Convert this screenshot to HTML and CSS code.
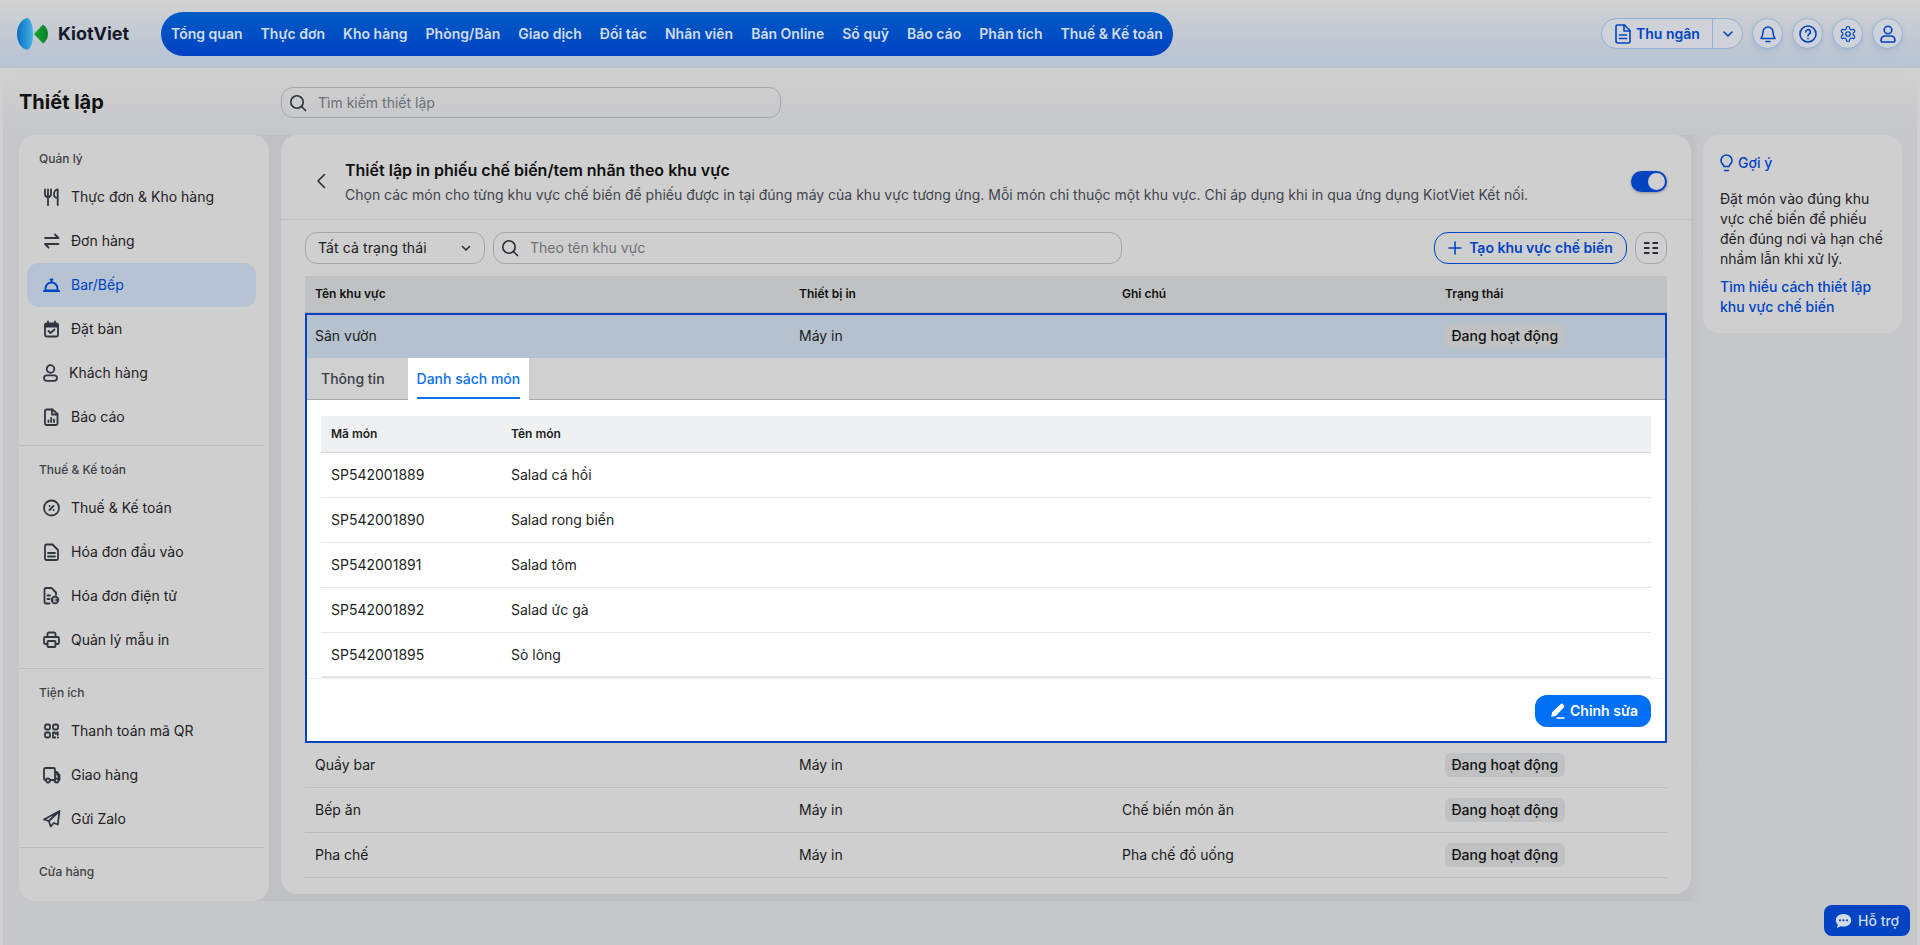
FILE: index.html
```html
<!DOCTYPE html>
<html lang="vi">
<head>
<meta charset="utf-8">
<title>Thiết lập</title>
<link rel="stylesheet" href="styles.css">
</head>
<body>
<header class="topbar">
  <div class="logo">
    <svg class="logo-mark" width="32" height="32" viewBox="0 0 32 32"><defs><linearGradient id="lg" x1="0" x2="1"><stop offset="0" stop-color="#0a6cc6"/><stop offset="1" stop-color="#43b4e2"/></linearGradient><linearGradient id="lg2" x1="0" x2="1"><stop offset="0" stop-color="#14a52a"/><stop offset="1" stop-color="#0b7f2e"/></linearGradient></defs><path d="M11.500 0C5 1 1 8 1 16s4 15 10.500 16C15 31 17 23 17 16S15 1 11.500 0Z" fill="url(#lg)"/><path d="M18 16 27 6.500C30 8.500 32 12 32 16s-2 7.500-5 9.500Z" fill="url(#lg2)"/></svg>
    <span class="logo-text">KiotViet</span>
  </div>
  <nav class="mainnav">
    <a>Tổng quan</a><a>Thực đơn</a><a>Kho hàng</a><a>Phòng/Bàn</a><a>Giao dịch</a><a>Đối tác</a><a>Nhân viên</a><a>Bán Online</a><a>Sổ quỹ</a><a>Báo cáo</a><a>Phân tích</a><a>Thuế &amp; Kế toán</a>
  </nav>
  <div class="top-actions">
    <div class="cashier">
      <span class="cashier-main">
        <svg class="ic-blue" width="16" height="20" viewBox="0 0 16 20"><path d="M2.500 1h7L15 6.500V17a2 2 0 0 1-2 2H3a2 2 0 0 1-2-2V2.500A1.500 1.500 0 0 1 2.500 1Z"/><path d="M9 1v6h6M4.500 11h7M4.500 14.500h7"/></svg>
        Thu ngân
      </span>
      <span class="cashier-caret"><svg class="ic-blue" width="12" height="12" viewBox="0 0 12 12"><path d="m2 4 4 4 4-4"/></svg></span>
    </div>
    <button class="circle"><svg class="ic-blue" width="16" height="18" viewBox="0 0 16 18"><path d="M3 7a5 5 0 0 1 10 0c0 4 1.500 5.500 2 6.500H1C1.500 12.500 3 11 3 7ZM6 16.500h4"/></svg></button>
    <button class="circle"><svg class="ic-blue" width="18" height="18" viewBox="0 0 18 18"><circle cx="9" cy="9" r="8"/><path d="M6.800 7a2.300 2.300 0 1 1 3.400 2c-.8.500-1.200 1-1.200 2M9 13.500v.2"/></svg></button>
    <button class="circle"><svg class="ic-blue" width="18" height="18" viewBox="0 0 24 24"><path d="M12.200 2h-.4a2 2 0 0 0-2 2v.2a2 2 0 0 1-1 1.700l-.4.300a2 2 0 0 1-2 0l-.2-.1a2 2 0 0 0-2.700.7l-.2.400a2 2 0 0 0 .7 2.700l.2.100a2 2 0 0 1 1 1.700v.5a2 2 0 0 1-1 1.700l-.2.100a2 2 0 0 0-.7 2.700l.2.400a2 2 0 0 0 2.700.7l.2-.1a2 2 0 0 1 2 0l.4.300a2 2 0 0 1 1 1.700v.2a2 2 0 0 0 2 2h.4a2 2 0 0 0 2-2v-.2a2 2 0 0 1 1-1.700l.4-.3a2 2 0 0 1 2 0l.2.100a2 2 0 0 0 2.700-.7l.2-.4a2 2 0 0 0-.7-2.700l-.2-.1a2 2 0 0 1-1-1.700v-.5a2 2 0 0 1 1-1.700l.2-.1a2 2 0 0 0 .7-2.700l-.2-.4a2 2 0 0 0-2.700-.7l-.2.100a2 2 0 0 1-2 0l-.4-.3a2 2 0 0 1-1-1.700V4a2 2 0 0 0-2-2Z"/><circle cx="12" cy="12" r="3"/></svg></button>
    <button class="circle"><svg class="ic-blue" width="16" height="18" viewBox="0 0 16 18"><circle cx="8" cy="5" r="3.800"/><path d="M1 15.500c0-3 2-4.500 4.500-4.500h5c2.500 0 4.500 1.500 4.500 4.500 0 1-.6 1.500-1.500 1.500h-11C1.600 17 1 16.500 1 15.500Z"/></svg></button>
  </div>
</header>

<main class="panel">
  <div class="panel-head">
    <h1 class="page-title">Thiết lập</h1>
    <div class="search search-top">
      <svg class="ic-dark" width="18" height="18" viewBox="0 0 18 18"><circle cx="8" cy="8" r="6.200"/><path d="m12.500 12.500 4 4"/></svg>
      <span>Tìm kiếm thiết lập</span>
    </div>
  </div>

  <div class="workspace">
    <div class="work-main">
    <aside class="sidebar">
      <section class="side-section">
        <h2>Quản lý</h2>
        <a class="side-item"><svg class="ic-side" width="20" height="20" viewBox="0 0 20 20"><path d="M2 2.500V7a3 3 0 0 0 6 0V2.500M5 2.500V18M14.700 18V2.500C12.500 2.500 11 5 11 7.500s1.500 3.500 3.700 3.500"/></svg>Thực đơn &amp; Kho hàng</a>
        <a class="side-item"><svg class="ic-side" width="20" height="20" viewBox="0 0 20 20"><path d="M2 7h13.500l-3.500-3.500M15.500 13H2l3.500 3.500"/></svg>Đơn hàng</a>
        <a class="side-item active"><svg class="ic-active" width="20" height="20" viewBox="0 0 20 20"><path d="M2.500 13.500a6 6 0 0 1 12 0v2h-12ZM.8 16h15.400M8.500 7.500V5M7.500 4.500h2"/></svg>Bar/Bếp</a>
        <a class="side-item"><svg class="ic-side" width="20" height="20" viewBox="0 0 20 20"><rect x="2" y="4.500" width="13" height="13" rx="1.500"/><path d="M2 7.500h13M2 5.800h13M5 2.500v2M12 2.500v2M5.500 12l2 2 4-3.500"/></svg>Đặt bàn</a>
        <a class="side-item narrow"><svg class="ic-side" width="18" height="20" viewBox="0 0 18 20"><circle cx="7.500" cy="6" r="3.800"/><rect x="1" y="12.300" width="13" height="5.500" rx="2.700"/></svg>Khách hàng</a>
        <a class="side-item"><svg class="ic-side" width="20" height="20" viewBox="0 0 20 20"><path d="M3.500 2.500h6L14.500 7v9.500a1.500 1.500 0 0 1-1.500 1.500H3.500A1.500 1.500 0 0 1 2 16.500V4a1.500 1.500 0 0 1 1.500-1.500Z"/><path d="M9 2.500V7.500h5.500M5.500 15v-1.500M8.200 15v-4M11 15v-2.500"/></svg>Báo cáo</a>
      </section>
      <section class="side-section">
        <h2>Thuế &amp; Kế toán</h2>
        <a class="side-item"><svg class="ic-side" width="20" height="20" viewBox="0 0 20 20"><circle cx="8.500" cy="10" r="7.500"/><path d="m6.500 12 4-4M6.500 8h.1M10.500 12h.1"/></svg>Thuế &amp; Kế toán</a>
        <a class="side-item"><svg class="ic-side" width="20" height="20" viewBox="0 0 20 20"><path d="M3.500 2.500h6L15 8v8.500a1.500 1.500 0 0 1-1.500 1.500h-10A1.500 1.500 0 0 1 2 16.500V4a1.500 1.500 0 0 1 1.500-1.500Z"/><path d="M5 11h7M5 14.500h7"/></svg>Hóa đơn đầu vào</a>
        <a class="side-item"><svg class="ic-side" width="20" height="20" viewBox="0 0 20 20"><path d="M6.500 17.500H3A1.500 1.500 0 0 1 1.500 16V3.500A1.500 1.500 0 0 1 3 2h5.500l4.500 4.500V9"/><path d="M4.500 9.500h2.500M4.500 13h2"/><circle cx="12" cy="14" r="4.200" fill="#2f3640" stroke="none"/><path class="ic-e" d="M13.200 12.200h-2.300v3.600h2.300M10.900 14h2"/></svg>Hóa đơn điện tử</a>
        <a class="side-item"><svg class="ic-side" width="20" height="20" viewBox="0 0 20 20"><path d="M4.500 7V4a1.500 1.500 0 0 1 1.500-1.500h5A1.500 1.500 0 0 1 12.500 4v3M4.500 14H2.500A1.500 1.500 0 0 1 1 12.500v-4A1.500 1.500 0 0 1 2.500 7h12A1.500 1.500 0 0 1 16 8.500v4a1.500 1.500 0 0 1-1.500 1.500h-2"/><rect x="4.500" y="11" width="8" height="6" rx="1"/></svg>Quản lý mẫu in</a>
      </section>
      <section class="side-section">
        <h2>Tiện ích</h2>
        <a class="side-item"><svg class="ic-side" width="20" height="20" viewBox="0 0 20 20"><rect x="2" y="3.500" width="5" height="5" rx="1.500"/><rect x="10" y="3.500" width="5" height="5" rx="1.500"/><rect x="2" y="11.500" width="5" height="5" rx="1.500"/><path d="M10 16.500v-5h1.800l1 1.500 1.200-1.500h.8v2.500M14.800 16.500h.2M10.800 16.500h1.500"/></svg>Thanh toán mã QR</a>
        <a class="side-item"><svg class="ic-side" width="20" height="20" viewBox="0 0 20 20"><path d="M2.800 15H2.500A1.500 1.500 0 0 1 1 13.500v-9A1.500 1.500 0 0 1 2.500 3h8A1.500 1.500 0 0 1 12 4.500V15H7.200"/><path d="M12 7h2l2.500 3v5h-.5" fill="#2f3640"/><circle cx="5" cy="15.500" r="2"/><circle cx="13.500" cy="15.500" r="2"/></svg>Giao hàng</a>
        <a class="side-item"><svg class="ic-side" width="20" height="20" viewBox="0 0 20 20"><path d="M16.500 2 1 10.500l4.800 1.500 2 5.500 3-3.500 4 1.500ZM16.500 2 5.800 12"/></svg>Gửi Zalo</a>
      </section>
      <section class="side-section last">
        <h2>Cửa hàng</h2>
      </section>
    </aside>

    <section class="content">
      <div class="content-head">
        <svg class="ic-dark back" width="10" height="16" viewBox="0 0 10 16"><path d="M8.500 1.500 2 8l6.500 6.500"/></svg>
        <div class="head-text">
          <h2>Thiết lập in phiếu chế biến/tem nhãn theo khu vực</h2>
          <p>Chọn các món cho từng khu vực chế biến để phiếu được in tại đúng máy của khu vực tương ứng. Mỗi món chỉ thuộc một khu vực. Chỉ áp dụng khi in qua ứng dụng KiotViet Kết nối.</p>
        </div>
        <span class="toggle"><span class="knob"></span></span>
      </div>

      <div class="toolbar">
        <div class="select">
          <span>Tất cả trạng thái</span>
          <svg class="ic-dark" width="10" height="10" viewBox="0 0 10 10"><path d="m1.500 3.500 3.500 3.500 3.500-3.500"/></svg>
        </div>
        <div class="search search-area">
          <svg class="ic-dark" width="18" height="18" viewBox="0 0 18 18"><circle cx="8" cy="8" r="6.200"/><path d="m12.500 12.500 4 4"/></svg>
          <span>Theo tên khu vực</span>
        </div>
        <button class="btn-add"><svg class="ic-blue" width="14" height="14" viewBox="0 0 14 14"><path d="M7 1v12M1 7h12"/></svg>Tạo khu vực chế biến</button>
        <button class="btn-grid"><svg class="ic-grid" width="16" height="14" viewBox="0 0 16 14"><path d="M1 2h5.500M9.500 2H15M1 7h5.500M9.500 7H15M1 12h5.500M9.500 12H15"/></svg></button>
      </div>

      <div class="table">
        <div class="row row-head"><span>Tên khu vực</span><span>Thiết bị in</span><span>Ghi chú</span><span>Trạng thái</span></div>
        <div class="open">
          <div class="row row-selected"><span>Sân vườn</span><span>Máy in</span><span></span><span><b class="badge">Đang hoạt động</b></span></div>
          <div class="tabs"><a class="tab">Thông tin</a><a class="tab tab-active"><span>Danh sách món</span></a></div>
          <div class="detail">
            <div class="items">
              <div class="item item-head"><span>Mã món</span><span>Tên món</span></div>
              <div class="item"><span>SP542001889</span><span>Salad cá hồi</span></div>
              <div class="item"><span>SP542001890</span><span>Salad rong biển</span></div>
              <div class="item"><span>SP542001891</span><span>Salad tôm</span></div>
              <div class="item"><span>SP542001892</span><span>Salad ức gà</span></div>
              <div class="item item-last"><span>SP542001895</span><span>Sò lông</span></div>
            </div>
            <div class="detail-foot">
              <button class="btn-edit"><svg width="16" height="16" viewBox="0 0 16 16"><path d="M11.500 1.200a1.700 1.700 0 0 1 2.400 0l.9.900a1.700 1.700 0 0 1 0 2.400L7 12.800 2.200 14l.9-4.800Z" fill="#fff"/><path d="M8 15h7" stroke="#fff" stroke-width="1.500"/></svg>Chỉnh sửa</button>
            </div>
          </div>
        </div>
        <div class="row"><span>Quầy bar</span><span>Máy in</span><span></span><span><b class="badge">Đang hoạt động</b></span></div>
        <div class="row"><span>Bếp ăn</span><span>Máy in</span><span>Chế biến món ăn</span><span><b class="badge">Đang hoạt động</b></span></div>
        <div class="row"><span>Pha chế</span><span>Máy in</span><span>Pha chế đồ uống</span><span><b class="badge">Đang hoạt động</b></span></div>
      </div>
    </section>
    </div>

    <aside class="tips">
      <h3><svg class="ic-blue" width="13" height="18" viewBox="0 0 13 18"><path d="M4 12.500C3.500 10.500 1 9.500 1 6.500a5.500 5.500 0 0 1 11 0c0 3-2.500 4-3 6ZM4.500 16.500h4"/></svg>Gợi ý</h3>
      <p>Đặt món vào đúng khu vực chế biến để phiếu đến đúng nơi và hạn chế nhầm lẫn khi xử lý.</p>
      <a>Tìm hiểu cách thiết lập khu vực chế biến</a>
    </aside>
  </div>
</main>

<button class="support"><svg width="17" height="16" viewBox="0 0 17 16"><path d="M8.500 1C4 1 .8 3.800.8 7.300c0 1.700.8 3.200 2 4.300L2 15l3.700-1.800c.9.300 1.800.4 2.800.4 4.500 0 7.700-2.800 7.700-6.300S13 1 8.500 1Z" fill="#d3dbe9"/><circle cx="5" cy="7.300" r="1.100" fill="#0044c4"/><circle cx="8.500" cy="7.300" r="1.100" fill="#0044c4"/><circle cx="12" cy="7.300" r="1.100" fill="#0044c4"/></svg>Hỗ trợ</button>
</body>
</html>
```

FILE: styles.css
```css
* { box-sizing: border-box; }
html, body { height: 100%; }
body {
  margin: 0;
  height: 945px;
  overflow: hidden;
  font-family: Inter, "Noto Sans", sans-serif;
  font-size: 14px;
  line-height: 20px;
  color: #1b1b1c;
  background: linear-gradient(180deg, #d2d2d2 0, #b5c3d3 68px, #d0d0d0 68px);
  position: relative;
}
h1, h2, h3, p { margin: 0; }
svg { flex: none; display: block; fill: none; stroke-width: 1.6; stroke-linecap: round; stroke-linejoin: round; }
button { font: inherit; cursor: default; }
.ic-blue { stroke: #0044c4; }
.ic-dark { stroke: #2a2d33; }
.ic-side { stroke: #2f3640; stroke-width: 1.8; }
.ic-active { stroke: #0044c4; stroke-width: 1.8; }
.ic-grid { stroke: #2a2d33; stroke-width: 2; stroke-linecap: butt; }
.ic-e { stroke: #d0d0d0; stroke-width: 1.1; }

.topbar { height: 68px; display: flex; align-items: flex-start; padding: 12px 17px 0 16px; }
.logo { width: 145px; height: 44px; display: flex; align-items: center; gap: 10px; flex: none; }
.logo-text { font-size: 18px; font-weight: 700; color: #15192b; }
.mainnav {
  height: 44px; display: flex; align-items: center; padding: 0 1px;
  border-radius: 22px;
  background: linear-gradient(180deg, #005bc4 0, #0042c4 100%);
}
.mainnav a { padding: 0 9px; font-weight: 600; color: #d1dcec; white-space: nowrap; letter-spacing: .015px; }
.top-actions { margin-left: auto; height: 31px; margin-top: 6px; display: flex; gap: 9px; }
.cashier { width: 142px; height: 31px; display: flex; border: 1px solid #93b1da; border-radius: 16px; background: #cfd3d9; }
.cashier-main { width: 111px; display: flex; align-items: center; gap: 5px; padding-left: 13px; color: #0044c4; font-weight: 600; border-right: 1px solid #93b1da; }
.cashier-caret { flex: 1; display: flex; align-items: center; justify-content: center; }
.circle { width: 31px; height: 31px; padding: 0; border: 1px solid #93b1da; border-radius: 50%; background: #cfd3d9; display: flex; align-items: center; justify-content: center; box-shadow: 0 2px 6px rgba(0,68,196,.12); }

.panel { margin: 0 3px; height: 877px; border-radius: 24px 24px 0 0; background: linear-gradient(180deg, #d0d0d0 0, #c6c7c9 67px); }
.panel-head { height: 67px; display: flex; align-items: flex-start; padding: 19px 0 0 16px; }
.page-title { width: 262px; font-size: 20px; line-height: 31px; font-weight: 700; color: #111; }
.search { display: flex; align-items: center; gap: 11px; border: 1px solid #a3a5aa; border-radius: 12px; padding: 0 7px; color: #6c7078; }
.search-top { width: 500px; height: 31px; }
.workspace { display: flex; align-items: flex-start; margin-left: 16px; }
.work-main { width: 1681px; height: 766px; display: flex; align-items: flex-start; gap: 12px; flex: none; border-radius: 16px 0 0 16px; background: linear-gradient(90deg, #bfc0c2 calc(100% - 10px), rgba(191,192,194,0)); }

.sidebar { width: 250px; height: 766px; background: #cfcfcf; border-radius: 16px; overflow: hidden; flex: none; }
.side-section { width: 245px; padding: 16px 0 6px; border-bottom: 1px solid #bcbdbf; }
.side-section.last { border-bottom: 0; }
.side-section h2 { font-size: 12px; line-height: 16px; font-weight: 500; color: #3d4148; padding-left: 20px; margin-bottom: 8px; }
.side-item { height: 44px; margin: 0 8px; padding-left: 16px; display: flex; align-items: center; gap: 8px; border-radius: 12px; color: #1f2125; }
.side-item.active { background: #b5c3d2; color: #0044c4; }

.content { width: 1410px; height: 759px; background: #cfcfcf; border-radius: 16px; flex: none; }
.content-head { height: 85px; display: flex; align-items: center; padding: 8px 24px 0 35px; border-bottom: 1px solid #bdbec0; }
.back { margin-right: 19px; }
.head-text { flex: 1; }
.head-text h2 { font-size: 16px; line-height: 24px; font-weight: 600; color: #111; }
.head-text p { margin-top: 3px; color: #3f444c; }
.toggle { width: 36px; height: 21px; border-radius: 11px; background: #0044c4; padding: 2px; display: flex; justify-content: flex-end; box-shadow: 0 1px 3px rgba(0,0,0,.3); }
.knob { width: 17px; height: 17px; border-radius: 50%; background: #d0d0d0; }

.toolbar { height: 56px; display: flex; align-items: center; padding: 0 24px; gap: 8px; }
.select { width: 180px; height: 32px; display: flex; align-items: center; justify-content: space-between; padding: 0 13px 0 12px; border: 1px solid #a3a5aa; border-radius: 12px; letter-spacing: .1px; }
.search-area { width: 629px; height: 32px; }
.btn-add { margin-left: auto; width: 193px; height: 32px; display: flex; align-items: center; justify-content: center; gap: 7px; padding: 0; border: 1.5px solid #0044c4; border-radius: 14px; background: transparent; color: #0044c4; font-weight: 600; }
.btn-grid { width: 32px; height: 32px; padding: 0; display: flex; align-items: center; justify-content: center; border: 1px solid #a3a5aa; border-radius: 12px; background: transparent; }

.table { margin: 0 24px; }
.row { display: grid; grid-template-columns: 484px 323px 323px 1fr; height: 45px; align-items: center; border-bottom: 1px solid #bcbdbf; padding-left: 10px; }
.row > span { padding-right: 10px; }
.row-head { height: 37px; background: #c0c1c3; font-size: 12px; font-weight: 600; color: #111; border-bottom: 1px solid #aeafb2; }
.open { height: 430px; border: 2px solid #0044c4; background: #fff; }
.row-selected { height: 43px; padding: 0 0 2px 8px; background: #b5c1ce; border-bottom: 0; }
.badge { display: inline-block; height: 24px; line-height: 24px; padding: 0 6.500px; border-radius: 6px; background: #c0c1c3; font-weight: 500; color: #111; vertical-align: middle; }
.tabs { height: 42px; display: flex; background: #d0d0d0; border-bottom: 1px solid #a8a9ac; padding-left: 14px; gap: 23px; }
.tab { line-height: 41px; color: #3a3e45; font-weight: 500; }
.tab-active { background: #fff; padding: 0 9px; margin-bottom: -1px; color: #0a70f0; }
.tab-active span { display: block; height: 41px; border-bottom: 2px solid #0a70f0; }
.detail { padding-top: 16px; }
.items { margin: 0 14px; }
.item { display: grid; grid-template-columns: 180px 1fr; height: 45px; align-items: center; padding-left: 10px; border-bottom: 1px solid #e5e6e8; color: #1d1f23; }
.item-head { height: 37px; background: #eff0f2; font-size: 12px; font-weight: 600; border-bottom: 1px solid #d3d5d9; }
.item-last { border-bottom: 2px solid #e5e6e8; }
.detail-foot { display: flex; justify-content: flex-end; padding: 16px 14px 0; border-top: 1px solid #eeeff1; }
.btn-edit { width: 116px; height: 32px; display: flex; align-items: center; justify-content: center; gap: 5px; padding: 0 0 0 1px; border: 0; border-radius: 12px; background: #0070f4; color: #fff; font-weight: 600; }

.tips { width: 199px; height: 198px; margin-left: 3px; padding: 18px 17px; background: #cfcfcf; border-radius: 16px; flex: none; }
.tips h3 { display: flex; align-items: center; gap: 5px; font-size: 14px; line-height: 20px; font-weight: 500; color: #0044c4; }
.tips p { margin-top: 16px; color: #1f2125; }
.tips a { display: block; margin-top: 8px; color: #0044c4; font-weight: 500; }

.support { position: absolute; right: 10px; bottom: 9px; width: 86px; height: 31px; display: flex; align-items: center; justify-content: center; gap: 6px; padding: 0; border: 0; border-radius: 8px; background: #0044c4; color: #d3dbe9; font-weight: 500; }
```
